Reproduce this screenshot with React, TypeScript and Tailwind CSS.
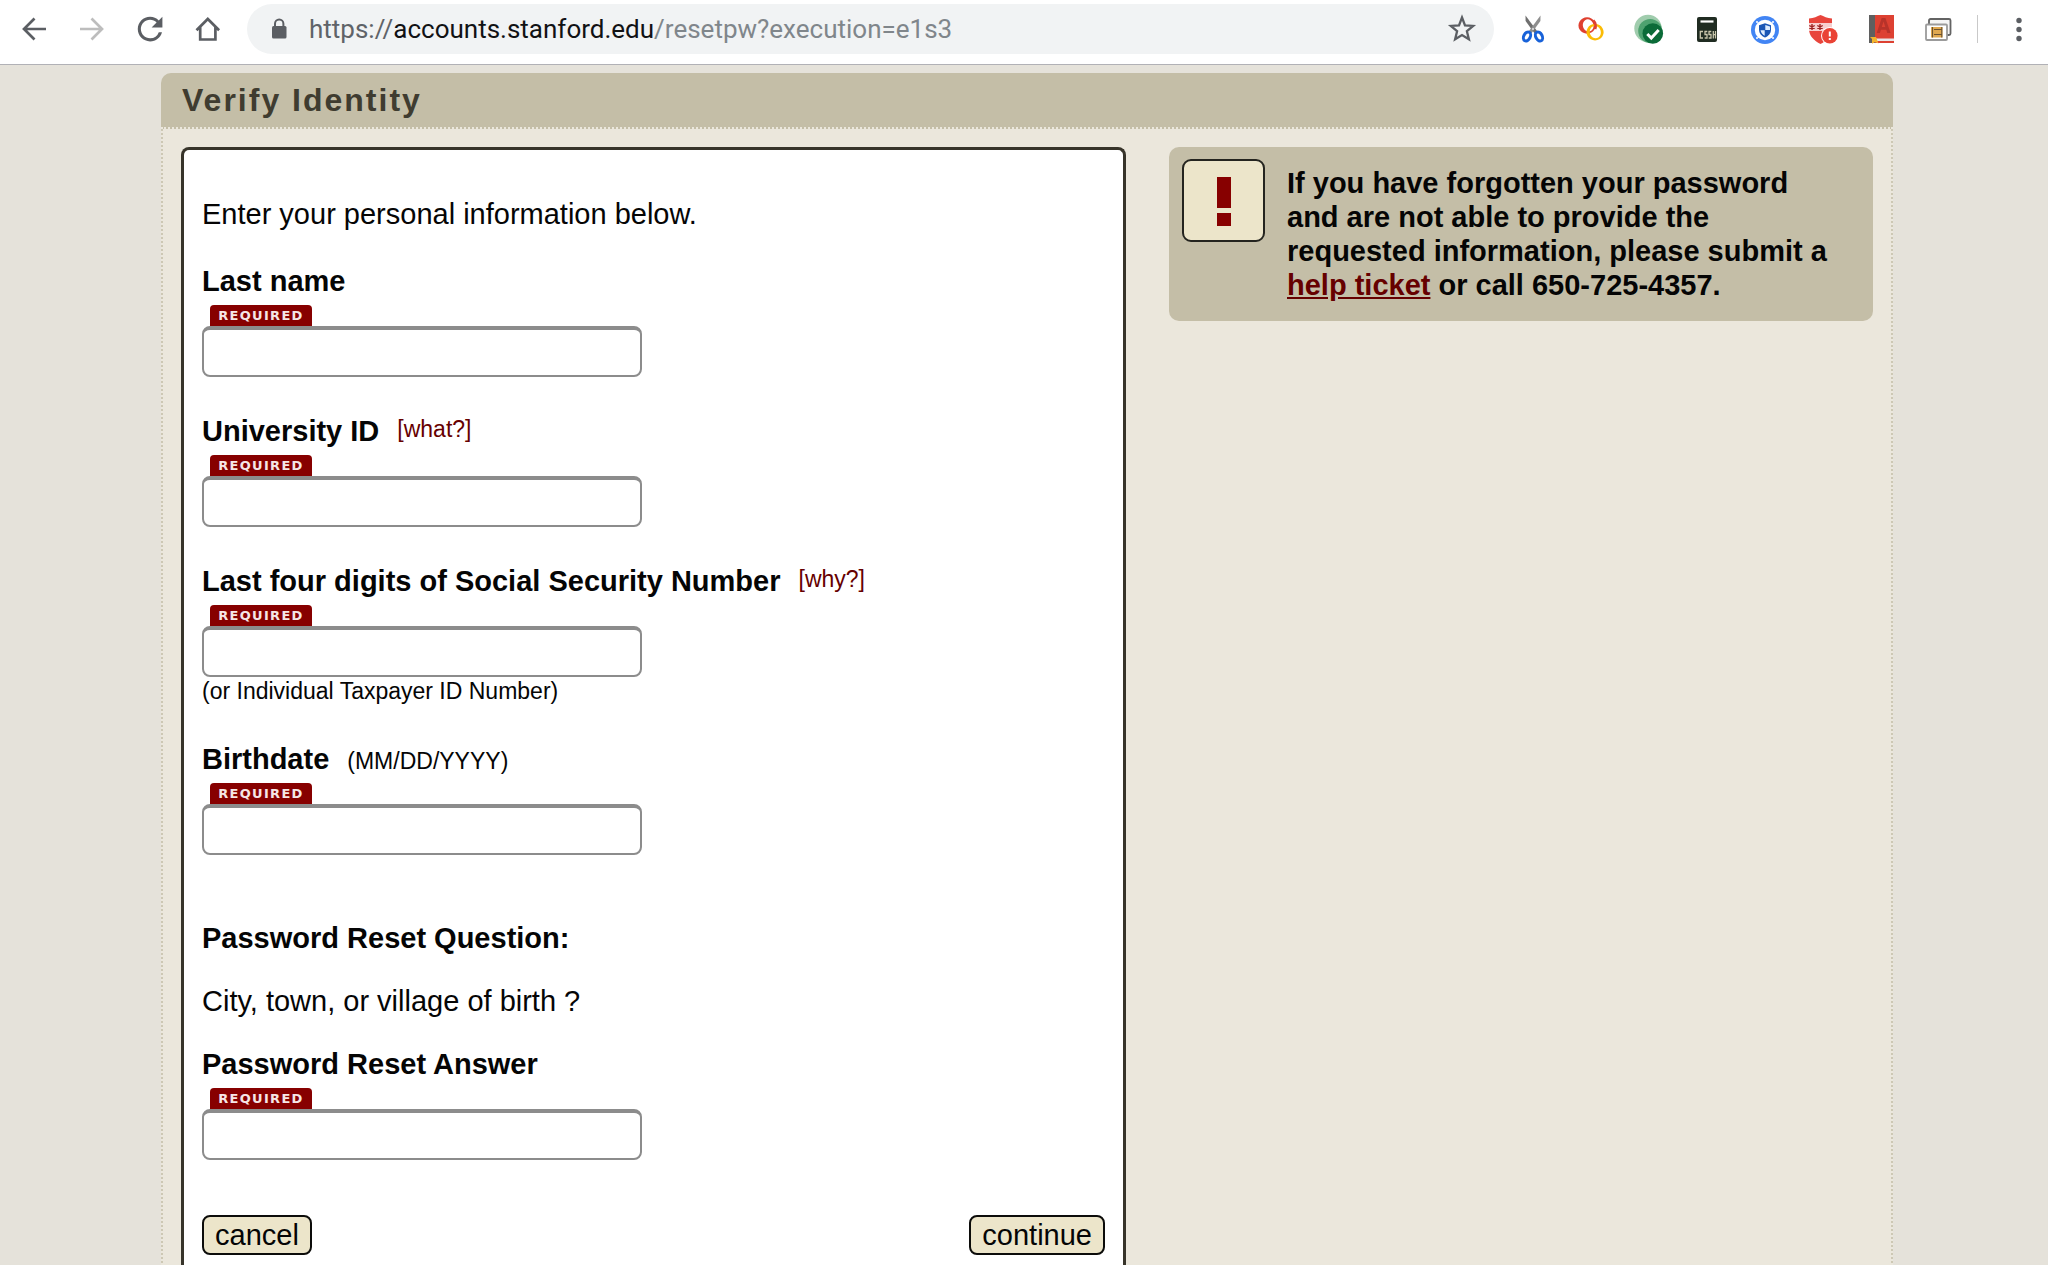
import type { ReactNode } from "react";

function Icon({ children }: { children: ReactNode }) {
  return (
    <svg viewBox="0 0 30 30" className="size-[30px] shrink-0" fill="none" aria-hidden="true">
      {children}
    </svg>
  );
}

function ToolButton({ label, disabled, children }: { label: string; disabled?: boolean; children: ReactNode }) {
  return (
    <button type="button" aria-label={label} disabled={disabled} className="shrink-0">
      <Icon>{children}</Icon>
    </button>
  );
}

function BrowserBar() {
  return (
    <header className="flex h-[65px] items-center border-b border-[#b1b1b6] bg-white pb-[7px] pl-[19px] pr-[14px]">
      <nav className="flex gap-7" aria-label="Browser">
        <ToolButton label="Back">
          <path d="M27 15H5.500M15.500 4.500 5 15l10.500 10.500" stroke="#5b5e63" strokeWidth="2.700" />
        </ToolButton>
        <ToolButton label="Forward" disabled>
          <path d="M3 15h21.500M14.500 4.500 25 15 14.500 25.500" stroke="#bdbdbd" strokeWidth="2.700" />
        </ToolButton>
        <ToolButton label="Reload">
          <path
            transform="translate(-3.400 -3.400) scale(1.540)"
            fill="#5b5e63"
            d="M17.650 6.350A7.958 7.958 0 0 0 12 4c-4.420 0-7.990 3.580-7.990 8s3.570 8 7.990 8c3.730 0 6.840-2.550 7.730-6h-2.080A5.990 5.990 0 0 1 12 18c-3.310 0-6-2.690-6-6s2.690-6 6-6c1.660 0 3.140.69 4.220 1.780L13 11h7V4l-2.350 2.350z"
          />
        </ToolButton>
        <ToolButton label="Home">
          <path d="M3.500 16.300 14.800 5l11.300 11.300M7.200 13v12.500h15.200V13" stroke="#5b5e63" strokeWidth="2.700" />
        </ToolButton>
      </nav>

      <div className="ml-6 flex h-[50px] min-w-0 flex-1 items-center rounded-full bg-[#f1f3f4] px-[17px]">
        <Icon>
          <rect x="8" y="12" width="14.500" height="12.500" rx="1.500" fill="#5b5e63" />
          <path d="M11 13V9.800a4.200 4.200 0 0 1 8.400 0V13" stroke="#5b5e63" strokeWidth="2" />
        </Icon>
        <div
          role="textbox"
          aria-label="Address"
          className="ml-[15px] min-w-0 flex-1 truncate font-['Roboto',sans-serif] text-[26px] leading-[34px] text-[#80868b]"
        >
          <span className="text-[#5f6368]">https://</span>
          <span className="text-[#111214]">accounts.stanford.edu</span>
          <span>/resetpw?execution=e1s3</span>
        </div>
        <ToolButton label="Bookmark this page">
          <path
            d="M15 3.500 18 11.300l8.200.6-6.300 5.300 2 8.100L15 21l-6.900 4.300 2-8.100-6.300-5.300 8.200-.6z"
            stroke="#5b5e63"
            strokeWidth="2.300"
          />
        </ToolButton>
      </div>

      <div className="ml-6 flex shrink-0 gap-7">
        <ToolButton label="Clipper">
          <path d="M7.500 1.500 7.600 7l9.400 13 2.600-2.200z" fill="#6f6f6f" />
          <path d="M22.500 1.500 22.400 7 13 20l-2.600-2.200z" fill="#8e8e8e" />
          <circle cx="15" cy="15" r="1" fill="#e5e5e5" />
          <ellipse cx="9" cy="22.500" rx="3.200" ry="4.800" transform="rotate(28 9 22.500)" stroke="#1862d9" strokeWidth="3" />
          <ellipse cx="21" cy="22.500" rx="3.200" ry="4.800" transform="rotate(-28 21 22.500)" stroke="#1862d9" strokeWidth="3" />
        </ToolButton>
        <ToolButton label="Linked rings">
          <path fillRule="evenodd" d="M11 3.300a8.600 8.200 0 1 0 .1 0zM11.800 5.300a5.300 6.200 -15 1 1-.1 0z" fill="#df4030" />
          <path fillRule="evenodd" d="M19 10a8.600 8.200 0 1 0 .1 0zM19 12a5.500 6.200 -15 1 1-.1 0z" fill="#fbbc05" />
          <path d="M17.300 6.500a8.400 8.400 0 0 1 1.800 8.500" stroke="#df4030" strokeWidth="2.600" />
        </ToolButton>
        <ToolButton label="Status check">
          <circle cx="14" cy="14.500" r="13.700" fill="#a0ccad" />
          <circle cx="16.200" cy="17" r="12" fill="#4ea26f" />
          <circle cx="18.800" cy="19.500" r="10.300" fill="#0b6b38" />
          <path d="m13.300 20 4 4 7.400-8" stroke="#fff" strokeWidth="3" />
        </ToolButton>
        <ToolButton label="Calculator">
          <rect x="5" y="3" width="20" height="25" rx="2" fill="#202c22" />
          <path d="M8.500 7.500h13" stroke="#fff" strokeWidth="2.200" />
          <path d="M11 17.500H8.300v6.500H11M15.300 17.500h-2.300v3h2v3.500h-2.300M19.300 17.500h-2.300v3h2v3.500h-2.300M21.300 17v7.500M23.500 17v7.500M21 20.700h3" stroke="#c9c6ac" strokeWidth="1.300" />
        </ToolButton>
        <ToolButton label="Privacy shield">
          <circle cx="15" cy="16" r="14" fill="#4285f4" />
          <circle cx="15" cy="16" r="10.200" fill="#fff" />
          <path d="M15 9.200 9 11.300v4.200c0 3.700 2.500 6.700 6 8 3.500-1.300 6-4.300 6-8v-4.200z" fill="#1b57b5" />
          <path d="M15.300 11v5H20c0-1.300.1-2.500 0-3.600zM14.700 16.300H10.500c.5 2.500 2 4.400 4.200 5.500z" fill="#dcecff" />
          <g fill="#fff">
            <circle cx="7" cy="8" r="1" />
            <circle cx="23" cy="8" r="1" />
            <circle cx="7" cy="24" r="1" />
            <circle cx="23" cy="24" r="1" />
          </g>
        </ToolButton>
        <ToolButton label="Password alert">
          <path d="M1 4.500C6 4 9 2.500 12.500 1 16 2.500 19 4 24 4.500V15c0 7-5 11.500-11.500 15C6 26.500 1 22 1 15z" fill="#e8453c" />
          <path d="M1 9h23v8H1z" fill="#f7cfcf" />
          <path d="M4 10v6M1.300 11.500l5.400 3M6.700 11.500l-5.400 3M12 10v6M9.300 11.500l5.400 3M14.700 11.500l-5.400 3" stroke="#9d2222" strokeWidth="1.400" />
          <circle cx="21.800" cy="21.800" r="8.800" fill="#fff" />
          <circle cx="21.800" cy="21.800" r="7.800" fill="#ea4335" />
          <path d="M21.800 17.500v5M21.800 24v2" stroke="#fff" strokeWidth="2" />
        </ToolButton>
        <ToolButton label="Dictionary">
          <path d="M3 1h25v28H3z" fill="#dd4132" />
          <path d="M3 1h6v28H3z" fill="#5f5f5f" />
          <path fillRule="evenodd" d="m15.700 4-5 15h3.200l1-3.300h5.400l1 3.300h3.300l-5.200-15zM17.500 7.500l1.800 5.500h-3.500z" fill="#b8332a" />
          <path d="M9 24.500h19V27H9z" fill="#e8e8e8" />
          <path d="M4 23h6l2.500 6.500-3.500-1.500-3 1.800V25z" fill="#f4b42c" />
        </ToolButton>
        <ToolButton label="Tab windows">
          <rect x="5" y="5" width="21.500" height="16" rx="1.500" fill="#f5f5f5" stroke="#636363" strokeWidth="1.800" />
          <rect x="2" y="10.500" width="21" height="15.500" rx="1" fill="#fff" stroke="#9b9b9b" strokeWidth="1.800" />
          <path d="M7 13h11.500v10.500H7z" fill="#e0a84f" />
          <path d="M8.500 13v10.500M10 15.500h8M10 20.500h8M17.800 13v10.500" stroke="#6b5230" strokeWidth="1.100" />
        </ToolButton>
      </div>
      <div className="ml-[23px] h-7 w-px shrink-0 bg-[#c9c9c9]" />
      <div className="ml-[26px] flex">
        <ToolButton label="Menu">
          <circle cx="15" cy="6.500" r="2.700" fill="#5b5e63" />
          <circle cx="15" cy="15.500" r="2.700" fill="#5b5e63" />
          <circle cx="15" cy="24.500" r="2.700" fill="#5b5e63" />
        </ToolButton>
      </div>
    </header>
  );
}

type FieldProps = { id: string; label: string; help?: string; format?: string; note?: string };

function Field({ id, label, help, format, note }: FieldProps) {
  return (
    <div>
      <div className={format ? "flex items-baseline gap-[18px]" : "flex items-start gap-[18px]"}>
        <label htmlFor={id} className="font-bold">
          {label}
        </label>
        {help && (
          <a href="#help" className="text-[23px] leading-[30px] text-[#660000]">
            {help}
          </a>
        )}
        {format && <span className="text-[23px] leading-7">{format}</span>}
      </div>
      <div className="ml-2 mt-[7px] h-[21px] w-[102px] rounded-t-[4px] bg-[#870000] text-center font-['DejaVu_Sans',sans-serif] text-[13px] font-bold leading-[21px] tracking-widest text-[#f6e6e6]">
        REQUIRED
      </div>
      <input
        id={id}
        type="text"
        required
        className="block h-[51px] w-[440px] max-w-full rounded-[8px] border-2 border-t-4 border-[#8c8c8c] bg-white px-2 outline-none"
      />
      {note && <p className="text-[23px] leading-7">{note}</p>}
    </div>
  );
}

const buttonClass =
  "rounded-[8px] border-2 border-[#0c0c0a] bg-[#ece5ca] px-[11px] text-[29px] leading-9";

function IdentityForm() {
  return (
    <form className="rounded-t-[8px] border-[3px] border-b-0 border-[#37342a] bg-white px-[18px] pb-8 pt-[47px]">
      <p>Enter your personal information below.</p>
      <div className="mt-[33px] flex flex-col gap-[37px]">
        <Field id="last-name" label="Last name" />
        <Field id="university-id" label="University ID" help="[what?]" />
        <Field
          id="ssn"
          label="Last four digits of Social Security Number"
          help="[why?]"
          note="(or Individual Taxpayer ID Number)"
        />
        <Field id="birthdate" label="Birthdate" format="(MM/DD/YYYY)" />
      </div>
      <h2 className="mt-[66px] font-bold">Password Reset Question:</h2>
      <p className="my-[29px]">City, town, or village of birth ?</p>
      <Field id="answer" label="Password Reset Answer" />
      <div className="mt-[55px] flex justify-between">
        <button type="button" className={buttonClass}>
          cancel
        </button>
        <button type="submit" className={buttonClass}>
          continue
        </button>
      </div>
    </form>
  );
}

function HelpNotice() {
  return (
    <aside className="flex items-start gap-[22px] self-start rounded-[10px] bg-[#c4bea7] pb-[19px] pl-[13px] pr-[28px] pt-[12px]">
      <svg viewBox="0 0 83 83" className="size-[83px] shrink-0" aria-hidden="true">
        <rect x="1" y="1" width="81" height="81" rx="8" fill="#ece5ca" stroke="#24241f" strokeWidth="2" />
        <path d="M35 18h14v31H35zM35 54h14v13H35z" fill="#870000" />
      </svg>
      <p className="min-w-0 flex-1 pt-[7px] font-bold">
        If you have forgotten your password and are not able to provide the requested information, please submit a{" "}
        <a href="#ticket" className="text-[#660000] underline">
          help ticket
        </a>{" "}
        or call 650-725-4357.
      </p>
    </aside>
  );
}

export default function App() {
  return (
    <div className="flex h-screen flex-col overflow-hidden bg-[#e5e2da] font-['Liberation_Sans',Arial,sans-serif] text-[29px] leading-[34px] text-[#050505]">
      <BrowserBar />
      <main className="flex min-h-0 flex-1 flex-col pl-[161px] pr-[155px] pt-2">
        <h1 className="shrink-0 rounded-t-[10px] border-b-2 border-dotted border-[#ebe7dc] bg-[#c4bea7] px-[21px] pb-[9px] pt-[9px] text-[32px] font-bold leading-9 tracking-[2px] text-[#3f3c30]">
          Verify Identity
        </h1>
        <div className="grid flex-1 grid-cols-[945fr_704fr] gap-[43px] border-x-2 border-dotted border-[#cdc8b4] bg-[#ebe7dc] px-[18px] pt-[18px]">
          <IdentityForm />
          <HelpNotice />
        </div>
      </main>
    </div>
  );
}
